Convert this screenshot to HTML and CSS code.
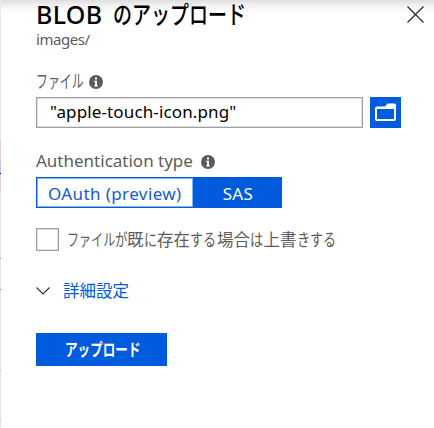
FILE: index.html
```html
<!DOCTYPE html>
<html lang="ja">
<head>
<meta charset="utf-8">
<title>BLOB のアップロード</title>
<link rel="stylesheet" href="styles.css">
</head>
<body>
<div class="edge"></div>
<main class="panel">
  <header class="header">
    <h1 class="title"><span class="title-latin">BLOB</span><span class="title-kana"><span class="squeeze">のアップロード</span></span></h1>
    <svg class="close" viewBox="0 0 17 17"><path d="M.5.5l16 16M16.5.5l-16 16"/></svg>
  </header>
  <div class="subtitle">images/</div>
  <div class="label file-label"><span class="file-text"><span class="squeeze">ファイル</span></span>
    <svg class="info" viewBox="0 0 14 14"><circle cx="7" cy="7" r="7"/><path d="M6 2.5h2v2H6zM5 5.7h3v4.8h1v1H5v-1h1V6.7H5z"/></svg>
  </div>
  <div class="file-row">
    <div class="input">"apple-touch-icon.png"</div>
    <div class="browse"><svg viewBox="0 0 21 18"><path fill-rule="evenodd" d="M0 5.500q0-2 2-2h8L12.500.5H19.500q1.500 0 1.500 1.500V16q0 2-2 2H2q-2 0-2-2zM2 6v10h17V6z"/></svg></div>
  </div>
  <div class="label auth-label"><span class="auth-text">Authentication type</span>
    <svg class="info" viewBox="0 0 14 14"><circle cx="7" cy="7" r="7"/><path d="M6 2.5h2v2H6zM5 5.7h3v4.8h1v1H5v-1h1V6.7H5z"/></svg>
  </div>
  <div class="toggle"><div class="option">OAuth (preview)</div><div class="option selected">SAS</div></div>
  <div class="check-row"><span class="box"></span><span class="check-text"><span class="kana k5"><span class="squeeze">ファイルが</span></span><span>既</span><span class="kana k1"><span class="squeeze">に</span></span><span>存在</span><span class="kana k2"><span class="squeeze">する</span></span><span>場合</span><span class="kana k1"><span class="squeeze">は</span></span><span>上書</span><span class="kana k3"><span class="squeeze">きする</span></span></span></div>
  <div class="advanced"><svg viewBox="0 0 14 8"><path d="M.5.5L7 7 13.500.5"/></svg><span>詳細設定</span></div>
  <div class="submit"><span class="squeeze">アップロード</span></div>
</main>
</body>
</html>
```
FILE: styles.css
```css
* { box-sizing: border-box; }
body {
  margin: 0;
  width: 434px;
  height: 428px;
  overflow: hidden;
  display: flex;
  background: #fff;
  color: #5c5c5c;
  font: 17px/24px "Noto Sans", "Noto Sans CJK JP", sans-serif;
  white-space: nowrap;
}
svg { display: block; flex: none; }
.edge {
  width: 1px;
  height: 428px;
  background: linear-gradient(#e8e8e8 141px, #dfc9e4 141px 161px, #b9c9e9 161px 173px, #000 173px 174px, #dfc9e4 174px 192px, #e8e8e8 192px 258px, #999 258px 259px, #e8e8e8 259px 289px, #888 289px 290px, #e8e8e8 290px 370px, #bbb 370px 371px, #e8e8e8 371px 420px, #bbb 420px 421px, #e8e8e8 421px);
}
.panel {
  width: 433px;
  height: 428px;
  padding-left: 35px;
  background: linear-gradient(#dedede, #f0f0f0 5px, #fafafa 10px, #fff 15px);
}
.squeeze { display: inline-block; transform-origin: 0 50%; }
.header { display: flex; height: 28px; }
.title { display: flex; margin: 0; width: 370px; font-size: 25px; line-height: 28px; font-weight: 500; color: #000; }
.title-latin { width: 77px; letter-spacing: .3px; }
.title-kana .squeeze { transform: scaleX(.76); }
.close { width: 17px; height: 17px; margin: 6px 0 0 1px; }
.close path { fill: none; stroke: #222; stroke-width: 1.1; }
.subtitle { height: 24px; font-size: 15px; line-height: 22px; letter-spacing: -.45px; }
.label { display: flex; align-items: center; height: 24px; }
.file-label { margin-top: 17px; }
.file-text { width: 53px; font-size: 18px; }
.file-text .squeeze { transform: scaleX(.66); }
.info { width: 14px; height: 14px; margin-top: 2px; }
.info circle { fill: #5c5c5c; }
.info path { fill: #fff; }
.file-row { display: flex; gap: 7px; margin-top: 4px; }
.input { width: 327px; height: 31px; border: 1px solid #a0a0a0; box-shadow: inset 0 0 0 1px #ddd; padding-left: 13px; line-height: 28px; letter-spacing: .13px; background: #fff; color: #000; }
.browse { width: 31px; height: 31px; padding: 6px 5px; background: #005cdc; }
.browse svg { width: 21px; height: 18px; }
.browse path { fill: #fff; }
.auth-label { margin-top: 21px; }
.auth-text { width: 165px; }
.toggle { display: flex; width: 246px; height: 31px; margin-top: 4px; }
.option { width: 158px; border: 1px solid #005cdc; box-shadow: inset 0 0 0 1px #8ab4ee; padding-left: 11px; line-height: 31px; letter-spacing: .4px; color: #1459d9; }
.selected { width: 88px; padding: 0; text-align: center; background: #005cdc; box-shadow: none; color: #fff; }
.check-row { display: flex; align-items: center; margin-top: 20px; height: 23px; }
.box { width: 23px; height: 23px; border: 1px solid #a0a0a0; box-shadow: inset 0 0 0 1px #ddd; margin-right: 8px; }
.check-text { display: flex; font-size: 16.5px; }
.kana .squeeze { transform: scaleX(.79); }
.k1 { width: 13.5px; }
.k2 { width: 27px; }
.k3 { width: 39px; }
.k5 { width: 60px; }
.k5 .squeeze { transform: scaleX(.73); }
.advanced { display: flex; align-items: center; margin-top: 28px; height: 24px; gap: 13px; color: #005cdc; font-size: 16.5px; }
.advanced svg { width: 14px; height: 8px; }
.advanced path { fill: none; stroke: #333; stroke-width: 1.2; }
.submit { width: 131px; height: 33px; margin-top: 30px; padding-left: 29px; line-height: 33px; background: #005cdc; color: #fff; font-weight: bold; }
.submit .squeeze { transform: scaleX(.74); }
```
